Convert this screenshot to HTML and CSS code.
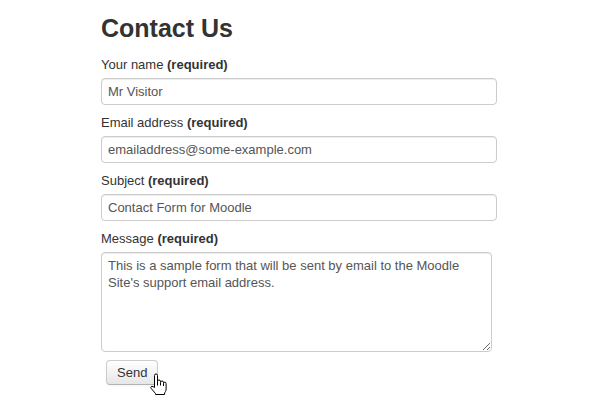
FILE: index.html
```html
<!DOCTYPE html>
<html lang="en">
<head>
<meta charset="utf-8">
<title>Contact Us</title>
<link rel="stylesheet" href="styles.css">
</head>
<body>
<main class="page">
  <h2 class="title">Contact Us</h2>
  <form class="contact-form">
    <div class="field">
      <label class="field-label" for="name">Your name <b>(required)</b></label>
      <input class="text-input" id="name" type="text" value="Mr Visitor">
    </div>
    <div class="field">
      <label class="field-label" for="email">Email address <b>(required)</b></label>
      <input class="text-input" id="email" type="text" value="emailaddress@some-example.com">
    </div>
    <div class="field">
      <label class="field-label" for="subject">Subject <b>(required)</b></label>
      <input class="text-input" id="subject" type="text" value="Contact Form for Moodle">
    </div>
    <div class="field">
      <label class="field-label" for="message">Message <b>(required)</b></label>
      <textarea class="text-area" id="message">This is a sample form that will be sent by email to the Moodle Site's support email address.</textarea>
    </div>
    <div class="actions">
      <button class="btn" type="button">Send</button>
      <svg class="pointer" width="18" height="23" viewBox="0 0 18 23" aria-hidden="true">
        <path d="M5.5 14.5 V2.5 A1.5 1.5 0 0 1 8.5 2.5 V8.5 A1.5 1.5 0 0 1 11.5 8.5 V9.5 A1.5 1.5 0 0 1 14.5 9.5 V10.5 A1.3 1.3 0 0 1 17.1 10.5 V16 C17.1 18 16.1 19 15.6 20 V21.5 H6.5 V20.5 L2.3 15.6 C1.5 14.6 1.8 13.3 2.9 13.3 C3.7 13.3 4.3 13.8 5.5 14.5 Z" fill="#fff" stroke="#000" stroke-width="1" stroke-linejoin="round"/>
        <path d="M8.5 8.5 V12.5 M11.5 9.5 V12.5 M14.5 10.5 V13" stroke="#000" stroke-width="1" fill="none"/>
      </svg>
    </div>
  </form>
</main>
</body>
</html>
```
FILE: styles.css
```css
html, body {
  margin: 0;
  padding: 0;
  background: #fff;
}

.page {
  min-height: 400px;
  box-sizing: border-box;
  padding: 13px 0 0 101px;
  font-family: "Liberation Sans", Arial, sans-serif;
  font-size: 13px;
  color: #333;
}

.title {
  margin: 0 0 13px;
  font-size: 25px;
  line-height: 30px;
  font-weight: bold;
  color: #333;
}

.contact-form {
  display: flex;
  flex-direction: column;
}

.field {
  display: flex;
  flex-direction: column;
  align-items: flex-start;
  margin-bottom: 9px;
}

.field-label {
  display: block;
  line-height: 18px;
  margin-bottom: 4px;
  color: #333;
}

.field-label b {
  font-weight: bold;
}

.text-input,
.text-area {
  box-sizing: border-box;
  margin: 0;
  font-family: "Liberation Sans", Arial, sans-serif;
  font-size: 13px;
  color: #555;
  background: #fff;
  border: 1px solid #ccc;
  border-radius: 4px;
  box-shadow: inset 0 1px 1px rgba(0, 0, 0, 0.075);
  outline: none;
}

.text-input {
  width: 396px;
  height: 27px;
  padding: 0 6px;
  line-height: 25px;
}

.text-area {
  width: 391px;
  height: 100px;
  padding: 4px 6px;
  line-height: 17px;
  resize: both;
}

.actions {
  position: relative;
  display: flex;
  padding-left: 5px;
  margin-top: -1px;
}

.btn {
  box-sizing: border-box;
  height: 25px;
  padding: 0 10px;
  font-family: "Liberation Sans", Arial, sans-serif;
  font-size: 13px;
  line-height: 23px;
  color: #333;
  background: linear-gradient(#ffffff, #e6e6e6);
  border: 1px solid #ccc;
  border-bottom-color: #b3b3b3;
  border-radius: 4px;
  box-shadow: inset 0 1px 0 rgba(255, 255, 255, 0.2), 0 1px 2px rgba(0, 0, 0, 0.05);
}

/* mouse pointer hovering over the send button */
.pointer {
  position: absolute;
  left: 48px;
  top: 13px;
  z-index: 1;
}
```
